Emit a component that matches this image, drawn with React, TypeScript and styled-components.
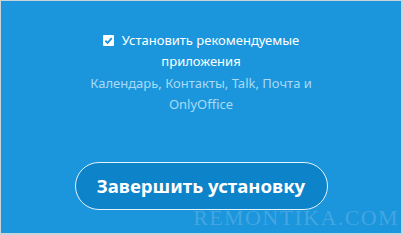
import React from 'react';
import styled, { createGlobalStyle } from 'styled-components';

const GlobalStyle = createGlobalStyle`
	html, body {
		margin: 0;
		padding: 0;
		background: #1b96dc;
	}
`;

const Screen = styled.div`
	box-sizing: border-box;
	width: 403px;
	height: 235px;
	background: #1b96dc;
	border: 1px solid #c9d3dc;
	border-right-width: 2px;
	border-bottom-width: 2px;
	position: relative;
	display: flex;
	flex-direction: column;
	align-items: center;
	font-family: "Noto Sans", "Open Sans", sans-serif;
	overflow: hidden;
`;

const Options = styled.div`
	display: flex;
	flex-direction: column;
	align-items: center;
	padding-top: 29px;
	width: 260px;
`;

const CheckRow = styled.label`
	display: flex;
	align-items: center;
	gap: 8px;
	color: #ffffff;
	font-size: 13px;
	line-height: 21px;
`;

const Box = styled.span`
	width: 11px;
	height: 11px;
	background: #ffffff;
	border-radius: 1px;
	display: flex;
	align-items: center;
	justify-content: center;
`;

const Line = styled.div<{ $muted?: boolean }>`
	color: ${p => (p.$muted ? '#a9daf6' : '#ffffff')};
	font-size: 13px;
	line-height: 21.5px;
	text-align: center;
	white-space: nowrap;
`;

const FinishButton = styled.button`
	margin-top: 46px;
	box-sizing: border-box;
	width: 253px;
	height: 48px;
	border-radius: 24px;
	border: 1px solid #e4f2fb;
	background: #0d83c9;
	color: #ffffff;
	font-family: "Noto Sans", "Open Sans", sans-serif;
	font-weight: 700;
	font-size: 18.6px;
	padding: 0;
	cursor: pointer;
`;

const Watermark = styled.div`
	position: absolute;
	right: 2px;
	bottom: 2px;
	font-family: "Liberation Serif", serif;
	font-size: 22px;
	letter-spacing: 1.4px;
	color: rgba(150, 195, 232, 0.35);
`;

export default function App() {
	return (
		<>
			<GlobalStyle />
			<Screen>
				<Options>
					<CheckRow>
						<Box>
							<svg width="9" height="9" viewBox="0 0 10 10">
								<path d="M1.5 5.2 L4 7.6 L8.6 2.4" stroke="#1b8fd6" strokeWidth="2" fill="none" />
							</svg>
						</Box>
						Установить рекомендуемые
					</CheckRow>
					<Line>приложения</Line>
					<Line $muted>Календарь, Контакты, Talk, Почта и</Line>
					<Line $muted>OnlyOffice</Line>
				</Options>
				<FinishButton>Завершить установку</FinishButton>
				<Watermark>REMONTIKA.COM</Watermark>
			</Screen>
		</>
	);
}
